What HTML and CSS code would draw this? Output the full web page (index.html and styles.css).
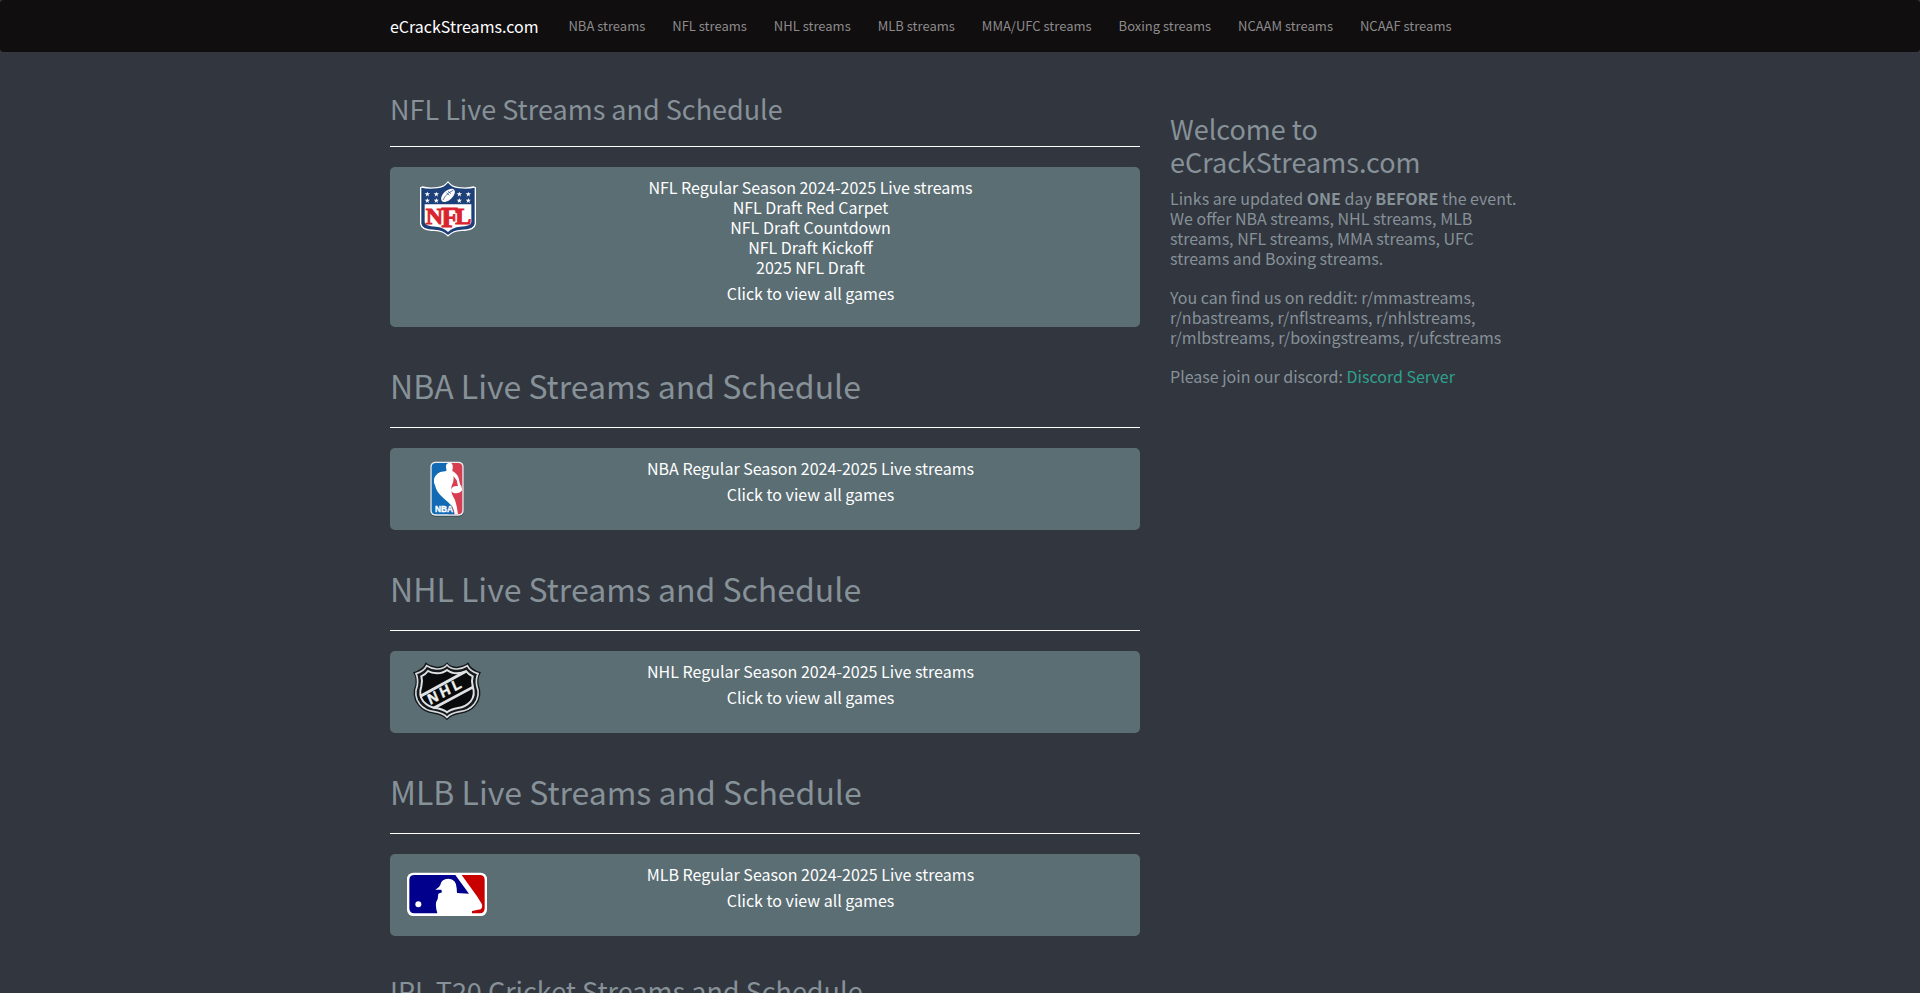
FILE: index.html
```html
<!DOCTYPE html>
<html lang="en">
<head>
<meta charset="utf-8">
<meta name="viewport" content="width=device-width, initial-scale=1">
<title>eCrackStreams.com</title>
<link rel="stylesheet" href="styles.css">
</head>
<body>
<nav class="navbar">
  <div class="container navbar-inner">
    <a class="brand" href="#">eCrackStreams.com</a>
    <ul class="nav-links">
      <li><a href="#">NBA streams</a></li>
      <li><a href="#">NFL streams</a></li>
      <li><a href="#">NHL streams</a></li>
      <li><a href="#">MLB streams</a></li>
      <li><a href="#">MMA/UFC streams</a></li>
      <li><a href="#">Boxing streams</a></li>
      <li><a href="#">NCAAM streams</a></li>
      <li><a href="#">NCAAF streams</a></li>
    </ul>
  </div>
</nav>

<div class="container page">
  <main class="leagues">
    <section class="league">
      <h2 class="title title-small">NFL Live Streams and Schedule</h2>
      <a class="card" href="#">
        <svg class="logo" viewBox="21 24 240 180" role="img" aria-label="NFL">
          <path d="M144 33Q155 49 175 51Q203 54 220 49L228 52V162Q226 173 217 177Q205 183 184 183Q159 184 144 200Q129 184 104 183Q83 183 71 177Q62 173 60 162V52L68 49Q85 54 113 51Q133 49 144 33Z" fill="#fff"/>
          <path d="M144 38Q156 53 176 55Q204 58 224 53V161Q222 170 214 174Q203 179 184 179Q159 180 144 195Q129 180 104 179Q85 179 74 174Q66 170 64 161V53Q84 58 112 55Q132 53 144 38Z" fill="#1e4079"/>
          <path d="M74 103H214V157Q213 163 206 166Q196 170 180 170Q157 172 144 186Q131 172 108 170Q92 170 82 166Q75 163 74 157Z" fill="#fff"/>
          <g class="nfl-word">
            <text x="77" y="161" font-size="72">N</text>
            <text x="124" y="171" font-size="86">F</text>
            <text x="166" y="161" font-size="72">L</text>
          </g>
          <g fill="#fff">
            <path id="star" d="M82 65L84 70H90L85 74L87 80L82 76L77 80L79 74L74 70H80Z"/>
            <use href="#star" x="27"/><use href="#star" x="96"/><use href="#star" x="123"/>
            <use href="#star" y="19"/><use href="#star" x="27" y="19"/><use href="#star" x="96" y="19"/><use href="#star" x="123" y="19"/>
            <ellipse cx="144" cy="76" rx="25" ry="14" transform="rotate(-42 144 76)"/>
          </g>
          <path d="M129 90Q138 70 160 61M139 68L148 76M144 64L153 71" fill="none" stroke="#1e4079" stroke-width="2"/>
        </svg>
        <div class="card-text">
          <p>NFL Regular Season 2024-2025 Live streams<br>NFL Draft Red Carpet<br>NFL Draft Countdown<br>NFL Draft Kickoff<br>2025 NFL Draft</p>
          <p>Click to view all games</p>
        </div>
      </a>
    </section>

    <section class="league">
      <h1 class="title">NBA Live Streams and Schedule</h1>
      <a class="card" href="#">
        <svg class="logo" viewBox="21 27 240 180" role="img" aria-label="NBA">
          <rect x="91" y="38" width="100" height="162" rx="15" fill="#374b52"/>
          <rect x="91" y="35" width="100" height="162" rx="15" fill="#e9eef2"/>
          <path d="M108 39H150V193H108Q95 193 95 180V52Q95 39 108 39Z" fill="#1269b4"/>
          <path d="M150 39H174Q187 39 187 52V180Q187 193 174 193H150Z" fill="#d73e52"/>
          <path d="M150 150L164 193H146Z" fill="#1269b4"/>
          <path d="M139 57Q135 41 145 39H154Q160 45 158 54L157 63Q171 70 176 84L180 103Q187 109 186 121Q180 130 169 130Q157 130 154 122Q154 112 163 109Q169 107 174 108L170 91L160 78Q163 94 155 107Q152 121 157 135Q168 151 170 169L174 193H164Q163 180 156 168Q143 155 130 144Q109 126 106 109L102 98V87Q106 73 121 66L139 63Z" fill="#fff"/>
          <text x="105" y="186" class="logo-word nba-word" font-size="25">NBA</text>
        </svg>
        <div class="card-text">
          <p>NBA Regular Season 2024-2025 Live streams</p>
          <p>Click to view all games</p>
        </div>
      </a>
    </section>

    <section class="league">
      <h1 class="title">NHL Live Streams and Schedule</h1>
      <a class="card" href="#">
        <svg class="logo" viewBox="21 36 240 180" role="img" aria-label="NHL">
          <path d="M141 37Q151 51 171 50Q192 48 205 37Q212 58 243 67Q233 82 236 104Q250 137 228 166Q211 188 181 191Q153 195 141 211Q129 195 101 191Q71 188 54 166Q32 137 46 104Q49 82 39 67Q70 58 77 37Q90 48 111 50Q131 51 141 37Z" fill="#15191b"/>
          <path d="M141 45Q153 58 172 57Q189 55 202 47Q210 64 234 71Q227 86 230 106Q242 137 223 162Q207 182 179 185Q153 189 141 202Q129 189 103 185Q75 182 59 162Q40 137 52 106Q55 86 48 71Q72 64 80 47Q93 55 110 57Q129 58 141 45Z" fill="#171a1c" stroke="#d7dadd" stroke-width="5"/>
          <path d="M141 60Q153 70 171 70Q188 69 198 63Q206 74 218 79Q214 93 218 109Q227 135 212 154Q197 171 174 174Q152 178 141 187Q130 178 108 174Q85 171 70 154Q55 135 64 109Q68 93 64 79Q76 74 84 63Q94 69 111 70Q129 70 141 60Z" fill="#080a0b" stroke="#dfe2e4" stroke-width="6"/>
          <path d="M60 134L190 63L203 66L62 143ZM94 173L221 106L221 115L104 178Z" fill="#dfe2e4"/>
          <text x="0 41 83" y="0" transform="translate(91 165) rotate(-29) skewX(-6)" class="logo-word nhl-word" font-size="44">NHL</text>
        </svg>
        <div class="card-text">
          <p>NHL Regular Season 2024-2025 Live streams</p>
          <p>Click to view all games</p>
        </div>
      </a>
    </section>

    <section class="league">
      <h1 class="title">MLB Live Streams and Schedule</h1>
      <a class="card" href="#">
        <svg class="logo" viewBox="21 30 240 180" role="img" aria-label="MLB">
          <rect x="21" y="53" width="240" height="130" rx="19" fill="#fff"/>
          <path d="M43 60H166L207 116L171 114L170 100Q170 73 145 71Q123 72 121 90Q119 97 106 104H124L126 112L115 116L113 132Q103 145 112 175H43Q28 175 28 160V75Q28 60 43 60Z" fill="#00008d"/>
          <path d="M185 60H239Q254 60 254 75V160Q254 175 239 175H216V168L242 163Q249 156 245 146L231 124Z" fill="#c90000"/>
          <circle cx="55" cy="148" r="9" fill="#fff"/>
        </svg>
        <div class="card-text">
          <p>MLB Regular Season 2024-2025 Live streams</p>
          <p>Click to view all games</p>
        </div>
      </a>
    </section>

    <section class="league">
      <h2 class="title title-small">IPL T20 Cricket Streams and Schedule</h2>
    </section>
  </main>

  <aside class="welcome">
    <h2>Welcome to eCrackStreams.com</h2>
    <p>Links are updated <strong>ONE</strong> day <strong>BEFORE</strong> the event. We offer NBA streams, NHL streams, MLB streams, NFL streams, MMA streams, UFC streams and Boxing streams.</p>
    <p>You can find us on reddit: r/mmastreams, r/nbastreams, r/nflstreams, r/nhlstreams, r/mlbstreams, r/boxingstreams, r/ufcstreams</p>
    <p>Please join our discord: <a href="#">Discord Server</a></p>
  </aside>
</div>
</body>
</html>
```
FILE: styles.css
```css
* { box-sizing: border-box; }

html { scrollbar-width: none; }

body {
  margin: 0;
  background: #32363f;
  color: #869198;
  font-family: "Noto Sans CJK SC", "Noto Sans", sans-serif;
  font-size: 16px;
  line-height: 20px;
}

h1, h2, p, ul { margin: 0; font-weight: 400; }
a { text-decoration: none; }

.container {
  max-width: 1170px;
  margin: 0 auto;
  padding: 0 15px;
}

.navbar {
  background: #100e0f;
  border-radius: 4px;
}

.navbar-inner {
  display: flex;
  align-items: center;
  gap: 30px;
  min-height: 52px;
}

.brand { color: #fff; }

.nav-links {
  display: flex;
  gap: 27px;
  padding: 0;
  list-style: none;
  font-size: 13px;
  white-space: nowrap;
}

.nav-links a { color: #8d8b8c; }

.page {
  display: grid;
  grid-template-columns: 25fr 12fr;
  column-gap: 30px;
  padding-top: 2px;
}

.league { padding-top: 38px; }

.title {
  padding-bottom: 22px;
  margin-bottom: 20px;
  border-bottom: 1px solid #fff;
  font-size: 32px;
  line-height: 40px;
}

.title-small {
  padding-bottom: 20px;
  font-size: 27px;
  line-height: 34px;
}

.card {
  display: flex;
  align-items: flex-start;
  padding: 10px 6px 10px 17px;
  border-radius: 5px;
  background: #5b6e74;
  color: #fff;
}

.logo {
  flex: none;
  width: 80px;
  height: 60px;
  margin: 1px 0;
}

.logo-word {
  font-family: "Liberation Sans", Arial, sans-serif;
  font-weight: 700;
}

.nfl-word {
  font-family: "Liberation Serif", "Times New Roman", serif;
  font-weight: 700;
  fill: #d9242f;
  stroke: #d9242f;
  stroke-width: 3px;
}

.nba-word { fill: #fff; stroke: #fff; stroke-width: 1px; }
.nhl-word { fill: #eef0f1; stroke: #eef0f1; stroke-width: 1px; }

.card-text {
  flex: 1;
  display: grid;
  gap: 6px;
  padding-bottom: 14px;
  text-align: center;
}

.welcome {
  display: flex;
  flex-direction: column;
  gap: 19px;
  padding-top: 58px;
}

.welcome h2 {
  margin-bottom: -9px;
  font-size: 27px;
  line-height: 33px;
}

.welcome a { color: #2fa08d; }
```
